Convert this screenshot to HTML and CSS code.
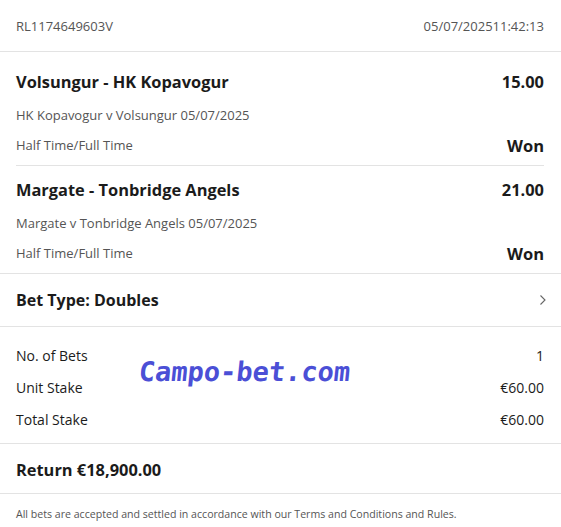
FILE: index.html
```html
<!DOCTYPE html>
<html lang="en">
<head>
    <meta charset="UTF-8">
    <title>Bet Receipt</title>
    <link rel="stylesheet" href="styles.css">
</head>
<body>
    <div class="receipt">
        <div class="header">
            <span>RL1174649603V</span>
            <span>05/07/202511:42:13</span>
        </div>

        <div class="selections">
            <div class="selection">
                <div class="row title">
                    <span>Volsungur - HK Kopavogur</span>
                    <span>15.00</span>
                </div>
                <div class="row sub">HK Kopavogur v Volsungur 05/07/2025</div>
                <div class="row market">
                    <span>Half Time/Full Time</span>
                    <span class="result">Won</span>
                </div>
            </div>
            <div class="selection">
                <div class="row title">
                    <span>Margate - Tonbridge Angels</span>
                    <span>21.00</span>
                </div>
                <div class="row sub">Margate v Tonbridge Angels 05/07/2025</div>
                <div class="row market">
                    <span>Half Time/Full Time</span>
                    <span class="result">Won</span>
                </div>
            </div>
        </div>

        <div class="bet-type">
            <span>Bet Type: Doubles</span>
            <svg width="8" height="12" viewBox="0 0 8 12"><path d="M1.5 1.5 L6 6 L1.5 10.5" fill="none" stroke="#666" stroke-width="1.1"/></svg>
        </div>

        <div class="summary">
            <div class="row"><span>No. of Bets</span><span>1</span></div>
            <div class="row"><span>Unit Stake</span><span>€60.00</span></div>
            <div class="row"><span>Total Stake</span><span>€60.00</span></div>
            <div class="watermark">Campo-bet.com</div>
        </div>

        <div class="return">Return €18,900.00</div>

        <div class="footer">All bets are accepted and settled in accordance with our Terms and Conditions and Rules.</div>
    </div>
</body>
</html>
```

FILE: styles.css
```css
body {
    margin: 0;
    padding: 0;
    background-color: white;
    font-family: 'Open Sans', sans-serif;
    color: #1b1b1b;
}

.receipt {
    width: 561px;
}

.header {
    display: flex;
    justify-content: space-between;
    align-items: center;
    height: 51px;
    padding: 0 17px 0 16px;
    border-bottom: 1px solid #e3e3e3;
    font-size: 13px;
    color: #555;
}

.selections {
    padding: 6px 17px 0 16px;
}

.selection {
    padding: 11px 0 10px;
}

.selection + .selection {
    border-top: 1px solid #e3e3e3;
}

.row {
    display: flex;
    justify-content: space-between;
    align-items: center;
}

.title {
    height: 24px;
    font-size: 16.4px;
    font-weight: 700;
}

.sub {
    height: 20px;
    margin-top: 12px;
    font-size: 13px;
    color: #555;
}

.market {
    height: 20px;
    margin-top: 10px;
    font-size: 13px;
    color: #555;
}

.market .result {
    font-size: 16.5px;
    font-weight: 700;
    color: #1b1b1b;
}

.bet-type {
    display: flex;
    justify-content: space-between;
    align-items: center;
    height: 52px;
    padding: 0 14px 0 16px;
    border-top: 1px solid #e3e3e3;
    border-bottom: 1px solid #e3e3e3;
    font-size: 16px;
    font-weight: 700;
}

.summary {
    position: relative;
    display: flex;
    flex-direction: column;
    gap: 10px;
    padding: 17px 17px 13px 16px;
    border-bottom: 1px solid #e3e3e3;
    font-size: 14px;
}

.summary .row {
    height: 22px;
}

.watermark {
    position: absolute;
    left: 139px;
    top: 29px;
    font-family: 'DejaVu Sans Mono', monospace;
    font-weight: 700;
    font-size: 27px;
    color: #4b4fd6;
    transform: skewX(-6deg);
}

.return {
    padding: 14px 16px 11px;
    line-height: 24px;
    font-size: 16.4px;
    font-weight: 700;
    border-bottom: 1px solid #e3e3e3;
}

.footer {
    padding: 12px 16px;
    line-height: 16px;
    font-size: 10.6px;
    color: #555;
}
```
